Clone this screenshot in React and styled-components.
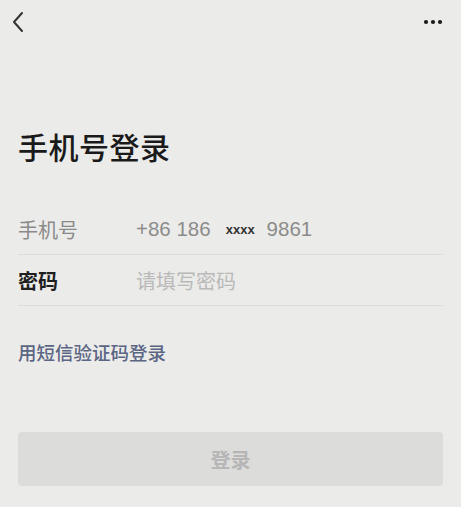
import React from "react";
import styled, { createGlobalStyle } from "styled-components";

const Global = createGlobalStyle`
  html, body { margin: 0; padding: 0; background: #ebebe9; }
  body { font-family: "Noto Sans CJK SC", "Noto Sans", sans-serif; }
`;

const Page = styled.div`
  width: 461px;
  height: 507px;
  background: #ebebe9;
  display: flex;
  flex-direction: column;
  box-sizing: border-box;
  padding: 0 18px;
`;

const TopBar = styled.div`
  height: 44px;
  display: flex;
  align-items: center;
  justify-content: space-between;
  margin: 0 -5px 0 -15px;
`;

const IconBtn = styled.div`
  width: 30px;
  height: 44px;
  display: flex;
  align-items: center;
  justify-content: center;
`;

const Title = styled.h1`
  margin: 82px 0 0;
  font-size: 30px;
  line-height: 40px;
  font-weight: 500;
  color: #1a1a1a;
  letter-spacing: 0.5px;
`;

const Form = styled.div`
  margin-top: 38px;
  display: flex;
  flex-direction: column;
`;

const Row = styled.div`
  height: 50px;
  display: flex;
  align-items: center;
  border-bottom: 1px solid #dcdcda;
`;

const Label = styled.div`
  width: 118px;
  font-size: 20px;
  color: ${(p) => (p.$strong ? "#1f1f1f" : "#8a8a8a")};
  font-weight: ${(p) => (p.$strong ? 700 : 400)};
`;

const Value = styled.div`
  font-family: "Liberation Sans", "Noto Sans CJK SC", sans-serif;
  font-size: 20.5px;
  color: #8b8b8b;
  display: flex;
  align-items: center;
`;

const Mask = styled.span`
  font-size: 13px;
  font-weight: 700;
  color: #333;
  margin: 0 12px 0 15px;
`;

const Placeholder = styled.div`
  font-size: 20px;
  color: #b9b9b9;
`;

const Link = styled.div`
  margin-top: 33px;
  font-size: 18.5px;
  color: #5b6584;
  font-weight: 500;
`;

const Button = styled.div`
  margin-top: 67px;
  height: 54px;
  border-radius: 4px;
  background: #dcdcdb;
  display: flex;
  align-items: center;
  justify-content: center;
  font-size: 20px;
  font-weight: 700;
  color: #b6b6b6;
`;

export default function App() {
  return (
    <>
      <Global />
      <Page>
        <TopBar>
          <IconBtn>
            <svg width="14" height="22" viewBox="0 0 14 22">
              <path d="M11 2 L3 11 L11 20" fill="none" stroke="#333" strokeWidth="2" strokeLinecap="round" strokeLinejoin="round" />
            </svg>
          </IconBtn>
          <IconBtn>
            <svg width="22" height="6" viewBox="0 0 22 6">
              <circle cx="4" cy="3" r="2.1" fill="#1a1a1a" />
              <circle cx="11" cy="3" r="2.1" fill="#1a1a1a" />
              <circle cx="18" cy="3" r="2.1" fill="#1a1a1a" />
            </svg>
          </IconBtn>
        </TopBar>
        <Title>手机号登录</Title>
        <Form>
          <Row>
            <Label>手机号</Label>
            <Value>
              +86 186<Mask>xxxx</Mask>9861
            </Value>
          </Row>
          <Row>
            <Label $strong>密码</Label>
            <Placeholder>请填写密码</Placeholder>
          </Row>
        </Form>
        <Link>用短信验证码登录</Link>
        <Button>登录</Button>
      </Page>
    </>
  );
}
